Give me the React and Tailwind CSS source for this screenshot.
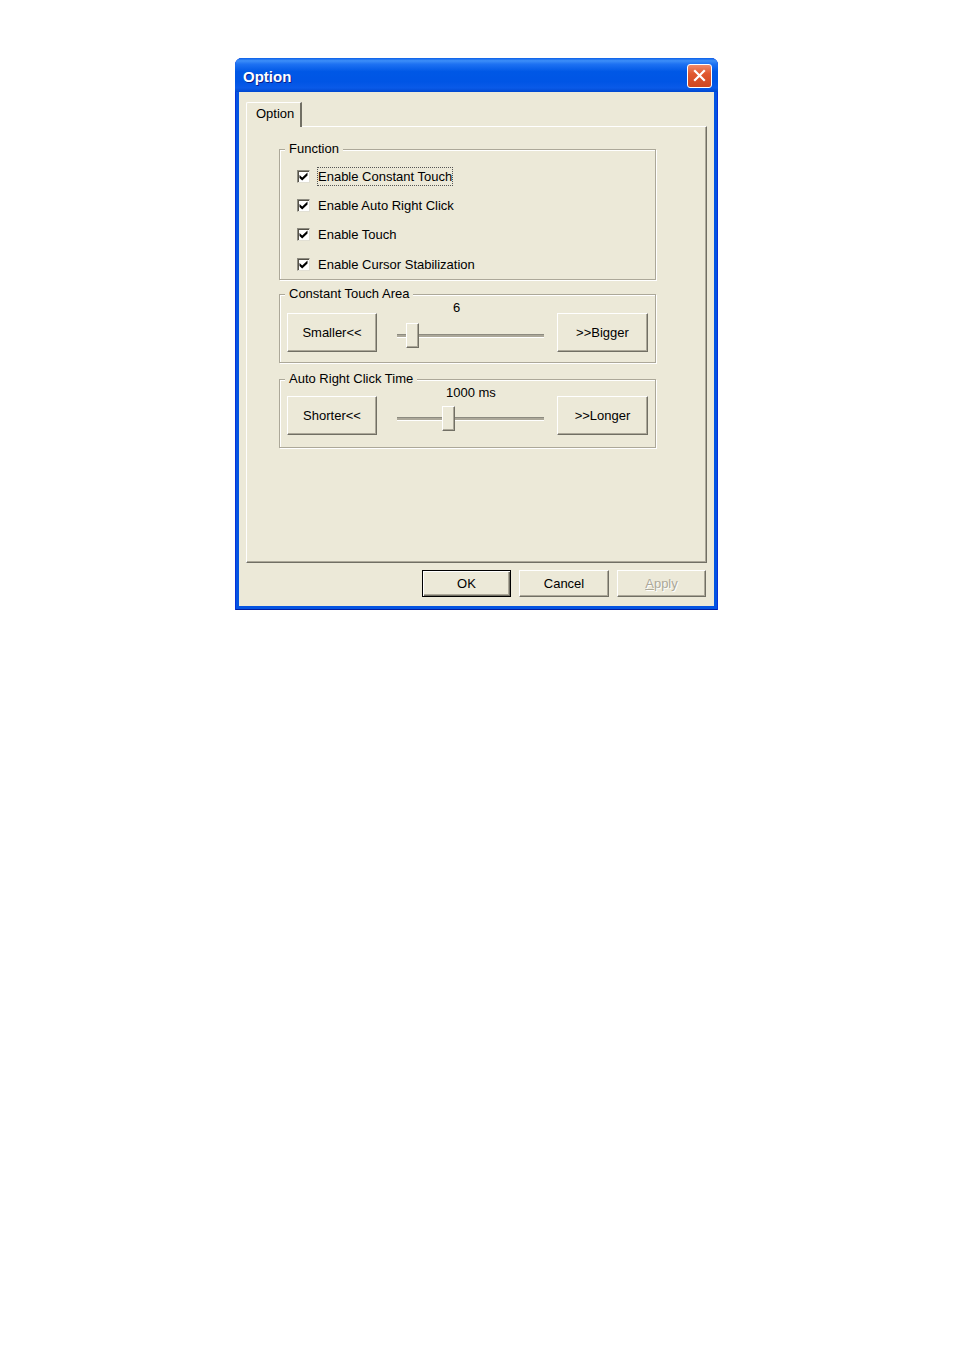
import React from 'react';

// Windows XP style "Option" property dialog

const FUNCTIONS = [
  { label: 'Enable Constant Touch', focused: true, row: 'h-[29px]' },
  { label: 'Enable Auto Right Click', row: 'h-[29px]' },
  { label: 'Enable Touch', row: 'h-[29px]' },
  { label: 'Enable Cursor Stabilization', row: 'h-[30px]' },
];

const RAISED =
  'border border-t-white border-l-white border-r-[#716f64] border-b-[#716f64] shadow-[inset_-1px_-1px_0_#aca899]';

const TRACK_W = 147;
const THUMB_W = 13;

function Button({ children, className = '', disabled = false, isDefault = false }) {
  const frame = isDefault
    ? 'border border-black shadow-[inset_1px_1px_0_#fff,inset_-1px_-1px_0_#716f64,inset_-2px_-2px_0_#aca899]'
    : RAISED;
  return (
    <button
      type="button"
      disabled={disabled}
      className={`flex items-center justify-center bg-[#ece9d8] text-[13px] leading-none ${
        disabled ? 'text-[#aca899] [text-shadow:1px_1px_0_#fff]' : 'text-black'
      } ${frame} ${className}`}
    >
      {children}
    </button>
  );
}

function CheckBox() {
  return (
    <span className="flex h-[13px] w-[13px] shrink-0 items-center justify-center border border-t-[#8d8b80] border-l-[#8d8b80] border-r-[#e2e0d4] border-b-[#e2e0d4] bg-white shadow-[inset_1px_1px_0_#555248]">
      <svg width="9" height="9" viewBox="0 0 9 9" aria-hidden="true">
        <path d="M0.5 3 L3.2 5.6 L8.5 0.4 L8.5 3.4 L3.2 8.6 L0.5 6 Z" fill="#000" />
      </svg>
    </span>
  );
}

function Slider({ value, min, max }) {
  const left = Math.round(((value - min) / (max - min)) * (TRACK_W - THUMB_W));
  return (
    <div className="relative ml-[20px] flex h-[25px] w-[147px] items-center">
      <div className="h-[4px] w-full border-t border-t-[#8d8b80] border-b border-b-white bg-[#aca899]" />
      <div className={`absolute top-0 h-[25px] w-[13px] bg-[#ece9d8] ${RAISED}`} style={{ left }} />
    </div>
  );
}

function Group({ title, className = '', children }) {
  return (
    <fieldset
      className={`w-[377px] border border-[#aca899] shadow-[inset_1px_1px_0_#fff,1px_1px_0_#fff] ${className}`}
    >
      <legend className="ml-[5px] bg-[#ece9d8] px-[4px] text-[13px] leading-[14px] text-black">{title}</legend>
      {children}
    </fieldset>
  );
}

function SliderGroup({ title, value, min, max, display, labelPad, less, more, padB, className }) {
  return (
    <Group title={title} className={`h-[76px] ${className}`}>
      <div className={`flex h-[61px] items-end px-[7px] ${padB}`}>
        <Button className="h-[39px] w-[90px] shrink-0">{less}</Button>
        <div className="flex h-full w-[180px] flex-col justify-between pb-[4px]">
          <span className={`text-[13px] leading-[13px] text-black ${labelPad}`}>{display}</span>
          <Slider value={value} min={min} max={max} />
        </div>
        <Button className="h-[39px] w-[91px] shrink-0">{more}</Button>
      </div>
    </Group>
  );
}

export default function App() {
  return (
    <div className="min-h-[1350px] w-full bg-white pl-[235px] pt-[58px] font-['Liberation_Sans',Arial,sans-serif]">
      <div className="flex h-[552px] w-[483px] flex-col overflow-hidden rounded-t-[7px] bg-[#0454e2] shadow-[inset_1px_0_0_#0831d9,inset_-1px_0_0_#0831d9,inset_0_-1px_0_#001ea0]">
        {/* Title bar */}
        <div className="flex h-[34px] shrink-0 items-center justify-between bg-[linear-gradient(to_bottom,#0a5fe8_0%,#3d8ef8_8%,#1e72f2_18%,#0058e6_40%,#0055e5_70%,#0a5ae8_88%,#0048d0_100%)] pl-[8px] pr-[6px]">
          <span className="pt-[2px] text-[15px] font-bold leading-none text-white [text-shadow:1px_1px_0_#0a1e8c]">
            Option
          </span>
          <button
            type="button"
            title="Close"
            className="mt-[1px] flex h-[24px] w-[25px] items-center justify-center rounded-[3px] border border-white bg-[linear-gradient(to_bottom,#f08a6a_0%,#e0582f_40%,#cf4620_100%)]"
          >
            <svg width="13" height="13" viewBox="0 0 13 13" aria-hidden="true">
              <path d="M2 2 L11 11 M11 2 L2 11" stroke="#fff" strokeWidth="2.2" strokeLinecap="square" />
            </svg>
          </button>
        </div>

        {/* Body */}
        <div className="mx-[4px] mb-[4px] flex flex-1 flex-col bg-[#ece9d8] pt-[10px]">
          {/* Tab */}
          <div className="relative z-10 -mb-[1px] ml-[7px] flex h-[25px] w-[56px] items-center rounded-tl-[2px] border-t border-l border-t-white border-l-white border-r-2 border-r-[#716f64] bg-[#ece9d8] pb-[3px] pl-[9px] text-[13px] leading-none text-black">
            Option
          </div>

          {/* Tab panel */}
          <div className="ml-[7px] flex h-[437px] w-[461px] flex-col border border-t-white border-l-white border-r-[#716f64] border-b-[#716f64] pl-[32px] pt-[15px] shadow-[inset_-1px_-1px_0_#aca899]">
            <Group title="Function" className="h-[138px]">
              <div className="flex flex-col pl-[17px] pt-[6px]">
                {FUNCTIONS.map((f) => (
                  <label key={f.label} className={`flex items-center gap-[7px] ${f.row}`}>
                    <CheckBox />
                    <span
                      className={`border py-[1px] text-[13px] leading-[15px] text-black ${
                        f.focused ? 'border-dotted border-[#555]' : 'border-transparent'
                      }`}
                    >
                      {f.label}
                    </span>
                  </label>
                ))}
              </div>
            </Group>

            <SliderGroup
              title="Constant Touch Area"
              className="mt-[7px]"
              value={6}
              min={2}
              max={62}
              display="6"
              labelPad="pl-[76px]"
              less="Smaller<<"
              more=">>Bigger"
              padB="pb-[10px]"
            />

            <SliderGroup
              title="Auto Right Click Time"
              className="mt-[9px]"
              value={1000}
              min={0}
              max={3000}
              display="1000 ms"
              labelPad="pl-[69px]"
              less="Shorter<<"
              more=">>Longer"
              padB="pb-[12px]"
            />
          </div>

          {/* Dialog buttons */}
          <div className="mt-[7px] flex justify-end gap-[8px] pr-[8px]">
            <Button isDefault className="h-[27px] w-[89px]">OK</Button>
            <Button className="h-[27px] w-[90px]">Cancel</Button>
            <Button disabled className="h-[27px] w-[89px]">
              <span className="underline">A</span>pply
            </Button>
          </div>
        </div>
      </div>
    </div>
  );
}
